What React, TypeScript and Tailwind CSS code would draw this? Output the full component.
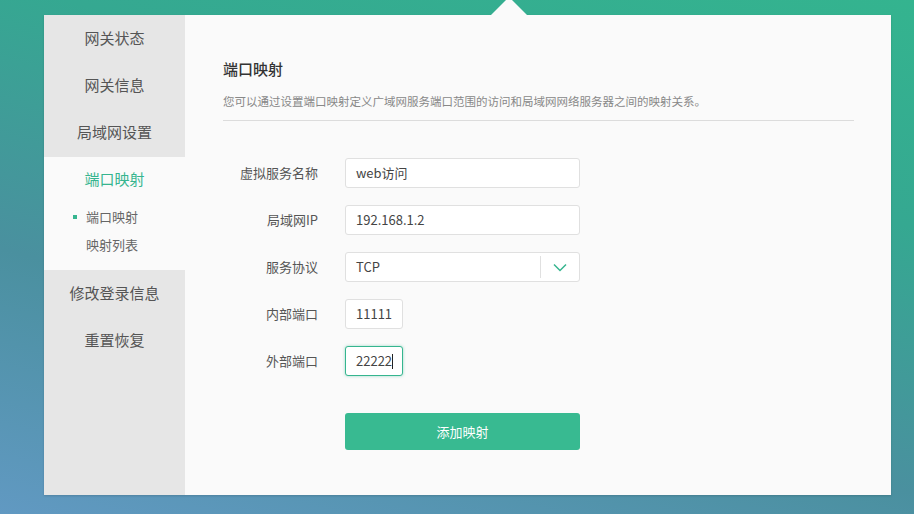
import React from "react";

const font = { fontFamily: '"Noto Sans CJK SC", "Noto Sans", sans-serif' };

function SideItem({ label }: { label: string }) {
  return (
    <div className="h-[47px] flex items-center justify-center text-[15px] text-[#555]">{label}</div>
  );
}

function Row({ label, children }: { label: string; children: React.ReactNode }) {
  return (
    <div className="flex items-center h-[30px]">
      <div className="w-[95px] text-right text-[13px] text-[#555] pr-0">{label}</div>
      <div className="ml-[27px]">{children}</div>
    </div>
  );
}

export default function App() {
  return (
    <div
      className="w-[914px] h-[514px] overflow-hidden pt-[15px] pl-[44px] bg-[linear-gradient(195deg,#34b48f_0%,#35a891_30%,#4a909f_65%,#6199c2_100%)]"
      style={font}
    >
      <div className="relative w-[847px] h-[480px] flex bg-[#fafafa] shadow-[0_1px_2px_rgba(0,0,0,0.15)]">
        <div className="absolute top-[-18px] left-[447px] w-0 h-0 border-l-[18px] border-r-[18px] border-b-[18px] border-l-transparent border-r-transparent border-b-[#fafafa]" />
        <div className="w-[141px] bg-[#e6e6e6] flex flex-col">
          <SideItem label="网关状态" />
          <SideItem label="网关信息" />
          <SideItem label="局域网设置" />
          <div className="h-[113px] bg-[#fafafa] mt-[1px] flex flex-col">
            <div className="h-[44px] flex items-center justify-center text-[15px] text-[#36b58f] pt-[1px]">端口映射</div>
            <div className="h-[28px] mt-[2px] flex items-center pl-[29px] text-[13px] text-[#666]">
              <span className="w-[4px] h-[4px] bg-[#36b58f] mr-[9px]" />
              端口映射
            </div>
            <div className="h-[28px] flex items-center pl-[42px] text-[13px] text-[#666]">映射列表</div>
          </div>
          <SideItem label="修改登录信息" />
          <SideItem label="重置恢复" />
        </div>
        <div className="flex-1 pl-[38px] pr-[37px]">
          <div className="pt-[43px] text-[15px] text-[#333] font-medium leading-[22px]">端口映射</div>
          <div className="mt-[12px] text-[11.5px] text-[#888] leading-[18px]">
            您可以通过设置端口映射定义广域网服务端口范围的访问和局域网网络服务器之间的映射关系。
          </div>
          <div className="mt-[10px] h-px bg-[#dcdcdc]" />
          <div className="mt-[37px] flex flex-col gap-[17px]">
            <Row label="虚拟服务名称">
              <div className="w-[235px] h-[30px] rounded-[3px] border border-[#e0e0e0] bg-white flex items-center px-[10px] text-[13px] text-[#444]">web访问</div>
            </Row>
            <Row label="局域网IP">
              <div className="w-[235px] h-[30px] rounded-[3px] border border-[#e0e0e0] bg-white flex items-center px-[10px] text-[13px] text-[#444]">192.168.1.2</div>
            </Row>
            <Row label="服务协议">
              <div className="w-[235px] h-[30px] rounded-[3px] border border-[#e0e0e0] bg-white flex items-center text-[13px] text-[#444]">
                <div className="flex-1 px-[10px]">TCP</div>
                <div className="w-px h-[22px] bg-[#e0e0e0]" />
                <div className="w-[38px] flex items-center justify-center">
                  <svg width="14" height="9" viewBox="0 0 14 9" fill="none">
                    <path d="M1 1.5 L7 7.5 L13 1.5" stroke="#36b58f" strokeWidth="1.5" />
                  </svg>
                </div>
              </div>
            </Row>
            <Row label="内部端口">
              <div className="w-[58px] h-[30px] rounded-[3px] border border-[#e0e0e0] bg-white flex items-center px-[10px] text-[13px] text-[#444]">11111</div>
            </Row>
            <Row label="外部端口">
              <div className="w-[58px] h-[30px] rounded-[3px] border border-[#36b58f] bg-white flex items-center pl-[10px] text-[13px] text-[#444] shadow-[0_0_3px_rgba(54,181,143,0.5)]">
                22222<span className="inline-block w-px h-[15px] bg-[#222]" />
              </div>
            </Row>
          </div>
          <div className="mt-[37px] ml-[122px] w-[235px] h-[37px] rounded-[3px] bg-[#38ba91] flex items-center justify-center text-[13px] text-white">
            添加映射
          </div>
        </div>
      </div>
    </div>
  );
}
